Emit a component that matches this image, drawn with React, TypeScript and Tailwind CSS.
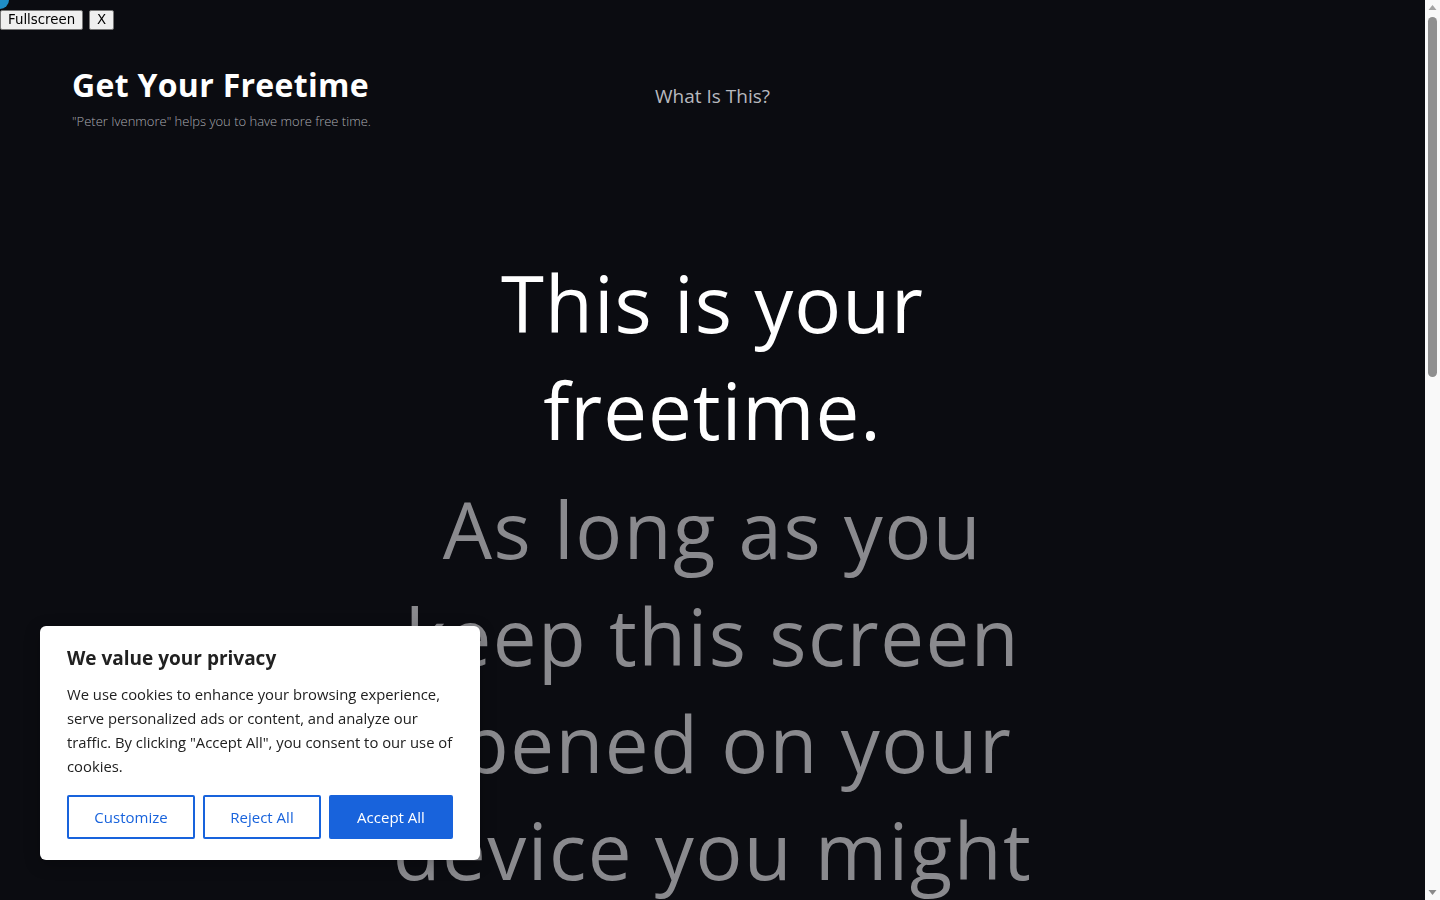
import React from 'react';

const heroWhite = ['This is your', 'freetime.'];
const heroGray = ['As long as you', 'keep this screen', 'opened on your', 'device you might', 'have more free', 'time to spend.'];

function CookieBanner() {
  return (
    <div className="fixed left-[40px] bottom-[40px] w-[440px] bg-white rounded-[6px] shadow-[0_4px_16px_rgba(0,0,0,0.25)] px-[27px] pt-[20px] pb-[21px] text-[#212121]">
      <h2 className="text-[19px] font-bold leading-[24px]">We value your privacy</h2>
      <p className="mt-[12px] text-[14.8px] leading-[24px] whitespace-nowrap">
        We use cookies to enhance your browsing experience,
        <br />
        serve personalized ads or content, and analyze our
        <br />
        traffic. By clicking "Accept All", you consent to our use of
        <br />
        cookies.
      </p>
      <div className="mt-[17px] flex gap-[8px]">
        <button className="w-[128px] h-[44px] border-2 border-[#1863dc] rounded-[2px] text-[#1863dc] text-[15px] font-medium">
          Customize
        </button>
        <button className="w-[118px] h-[44px] border-2 border-[#1863dc] rounded-[2px] text-[#1863dc] text-[15px] font-medium">
          Reject All
        </button>
        <button className="w-[124px] h-[44px] border-2 border-[#1863dc] bg-[#1863dc] rounded-[2px] text-white text-[15px] font-medium">
          Accept All
        </button>
      </div>
    </div>
  );
}

// page scrollbar, as the browser draws it in the reference
function Scrollbar() {
  return (
    <aside className="w-[15px] h-screen shrink-0 bg-[#f9f9f9] flex flex-col items-center">
      <svg width="9" height="15" viewBox="0 0 9 15" className="shrink-0">
        <polygon points="4.5,5 8.5,10 0.5,10" fill="#a3a3a3" />
      </svg>
      <div className="w-[9px] h-[360px] mt-[2px] rounded-full bg-[#8f8f8f]" />
      <div className="flex-1" />
      <svg width="9" height="15" viewBox="0 0 9 15" className="shrink-0">
        <polygon points="0.5,5 8.5,5 4.5,10" fill="#8a8a8a" />
      </svg>
    </aside>
  );
}

export default function App() {
  return (
    <div
      className="flex h-screen overflow-hidden bg-[#0b0c11] text-white"
      style={{ fontFamily: '"Open Sans", "Noto Sans", sans-serif' }}
    >
      <div className="flex-1 min-w-0 h-screen overflow-y-scroll">
        {/* corner dot */}
        <div className="fixed -left-[9px] -top-[9px] w-[18px] h-[18px] rounded-full bg-[#1f8dc6]" />

        {/* fullscreen controls */}
        <div className="fixed left-0 top-[10px] flex gap-[6px] z-10" style={{ fontFamily: '"DejaVu Sans", sans-serif' }}>
          <button className="h-[20px] px-[7px] bg-[#efefef] border border-[#767676] rounded-[2px] text-[13.33px] leading-none text-black">
            Fullscreen
          </button>
          <button className="h-[20px] w-[25px] bg-[#efefef] border border-[#767676] rounded-[2px] text-[13.33px] leading-none text-black">
            X
          </button>
        </div>

        <div className="pb-[400px]">
          <header className="grid grid-cols-3 px-[72px] pt-[66px]">
            <div>
              <h1 className="text-[32px] font-bold leading-[38px] tracking-[0.3px] whitespace-nowrap">Get Your Freetime</h1>
              <p className="mt-[8px] text-[13px] font-light text-[#a9aab0] leading-[18px] whitespace-nowrap">
                "Peter Ivenmore" helps you to have more free time.
              </p>
            </div>
            <nav className="flex justify-center pt-[16px]">
              <a className="text-[19px] text-[#b8b9bf] leading-[28px]">What Is This?</a>
            </nav>
            <div />
          </header>

          <main className="mt-[120px] flex flex-col items-center text-center">
            <h2 className="text-[78px] font-medium leading-[107px] tracking-[1px]">
              {heroWhite.map((line) => (
                <span key={line} className="block">{line}</span>
              ))}
            </h2>
            <p className="mt-[12px] text-[78px] font-medium leading-[107px] tracking-[1.5px] text-[#8a8a8e]">
              {heroGray.map((line) => (
                <span key={line} className="block">{line}</span>
              ))}
            </p>
          </main>
        </div>

        <CookieBanner />
      </div>
      <Scrollbar />
    </div>
  );
}
